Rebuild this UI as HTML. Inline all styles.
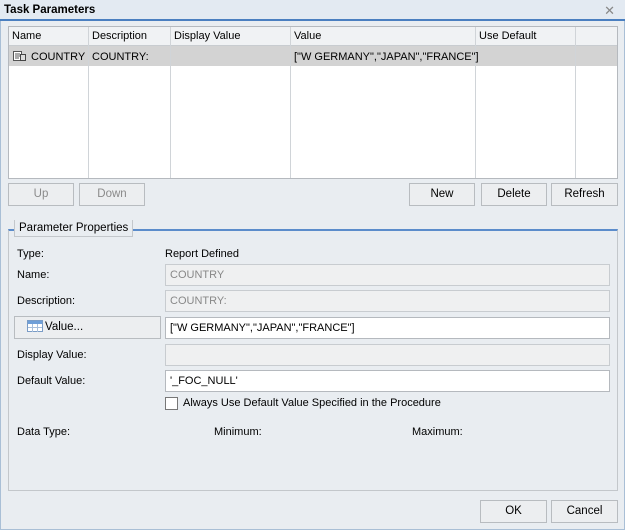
<!DOCTYPE html>
<html><head><style>
*{box-sizing:border-box;margin:0;padding:0}
body{width:625px;height:530px;background:#e9edf1;font-family:"Liberation Sans",sans-serif;font-size:11px;color:#000;position:relative;overflow:hidden}
.a{position:absolute}
.win{left:0;top:0;width:625px;height:530px;border:1px solid #a9bfd6;border-top:none}
.title{left:0;top:0;width:625px;height:21px;background:#e3eaf2;border-bottom:2px solid #4a7fc0;font-weight:bold;font-size:11.5px;padding:4px 0 0 4px}
.x{right:10px;top:3px;color:#888;font-size:13px}
.grid{left:8px;top:26px;width:610px;height:153px;background:#fff;border:1px solid #b5b9be}
.hdr{left:0;top:0;width:608px;height:19px;background:#f0f2f4;border-bottom:1px solid #c8ccd0}
.sel{left:0;top:19px;width:608px;height:20px;background:#d3d3d3}
.col{top:0;width:1px;height:151px;background:#d0d4d8}
.t{white-space:nowrap}
.btn{height:23px;border:1px solid #b8bcc0;background:#eceef0;text-align:center;line-height:21px;font-size:11.5px}
.dis{color:#8a8a8a}
.fs{left:8px;top:229px;width:610px;height:262px;border:1px solid #c3c7cb;border-top:2px solid #5b8ccb}
.leg{left:14px;top:220px;background:#e9edf1;border:1px solid #c3c7cb;border-top:none;padding:2px 4px;font-size:11.5px}
.f{left:165px;width:445px;height:22px;border:1px solid #c8ccd0;background:#eff0f1;padding:4px 4px;color:#888}
.fw{background:#fff;color:#000;border-color:#b5b9be}
</style></head><body>
<div class="a win"></div>
<div class="a title">Task Parameters</div>
<div class="a x">✕</div>
<div class="a grid">
 <div class="a hdr"></div>
 <div class="a sel"></div>
 <div class="a col" style="left:79px"></div>
 <div class="a col" style="left:161px"></div>
 <div class="a col" style="left:281px"></div>
 <div class="a col" style="left:466px"></div>
 <div class="a col" style="left:566px"></div>
 <div class="a t" style="left:3px;top:3px">Name</div>
 <div class="a t" style="left:83px;top:3px">Description</div>
 <div class="a t" style="left:165px;top:3px">Display Value</div>
 <div class="a t" style="left:285px;top:3px">Value</div>
 <div class="a t" style="left:470px;top:3px">Use Default</div>
 <svg class="a" style="left:4px;top:23px" width="14" height="12"><rect x="0.5" y="1.5" width="8" height="9" fill="#fff" stroke="#555"/><path d="M2 4h5M2 6h5M2 8h4" stroke="#555"/><rect x="7.5" y="4.5" width="5" height="6" fill="#ddd" stroke="#444"/></svg>
 <div class="a t" style="left:22px;top:24px">COUNTRY</div>
 <div class="a t" style="left:83px;top:24px">COUNTRY:</div>
 <div class="a t" style="left:285px;top:24px">["W GERMANY","JAPAN","FRANCE"]</div>
</div>
<div class="a btn dis" style="left:8px;top:183px;width:66px">Up</div>
<div class="a btn dis" style="left:79px;top:183px;width:66px">Down</div>
<div class="a btn" style="left:409px;top:183px;width:66px">New</div>
<div class="a btn" style="left:481px;top:183px;width:66px">Delete</div>
<div class="a btn" style="left:551px;top:183px;width:67px">Refresh</div>
<div class="a fs"></div>
<div class="a leg">Parameter Properties</div>
<div class="a t" style="left:17px;top:248px">Type:</div>
<div class="a t" style="left:165px;top:248px">Report Defined</div>
<div class="a t" style="left:17px;top:269px">Name:</div>
<div class="a f" style="top:264px">COUNTRY</div>
<div class="a t" style="left:17px;top:295px">Description:</div>
<div class="a f" style="top:290px">COUNTRY:</div>
<div class="a btn" style="left:14px;top:316px;width:147px;text-align:left;padding-left:12px">
<svg style="vertical-align:-2px;margin-right:2px" width="16" height="12"><rect x="0.5" y="0.5" width="15" height="11" fill="#fff" stroke="#7a9cc6"/><rect x="1" y="1" width="14" height="3" fill="#6f9fd8"/><path d="M1 7.5h14M5.5 4v8M10.5 4v8" stroke="#a8bfdc"/></svg>Value...</div>
<div class="a f fw" style="top:317px">["W GERMANY","JAPAN","FRANCE"]</div>
<div class="a t" style="left:17px;top:349px">Display Value:</div>
<div class="a f" style="top:344px"></div>
<div class="a t" style="left:17px;top:375px">Default Value:</div>
<div class="a f fw" style="top:370px">'_FOC_NULL'</div>
<div class="a" style="left:165px;top:397px;width:13px;height:13px;border:1px solid #777;background:#fff"></div>
<div class="a t" style="left:183px;top:397px">Always Use Default Value Specified in the Procedure</div>
<div class="a t" style="left:17px;top:426px">Data Type:</div>
<div class="a t" style="left:214px;top:426px">Minimum:</div>
<div class="a t" style="left:412px;top:426px">Maximum:</div>
<div class="a btn" style="left:480px;top:500px;width:67px">OK</div>
<div class="a btn" style="left:551px;top:500px;width:67px">Cancel</div>
</body></html>
